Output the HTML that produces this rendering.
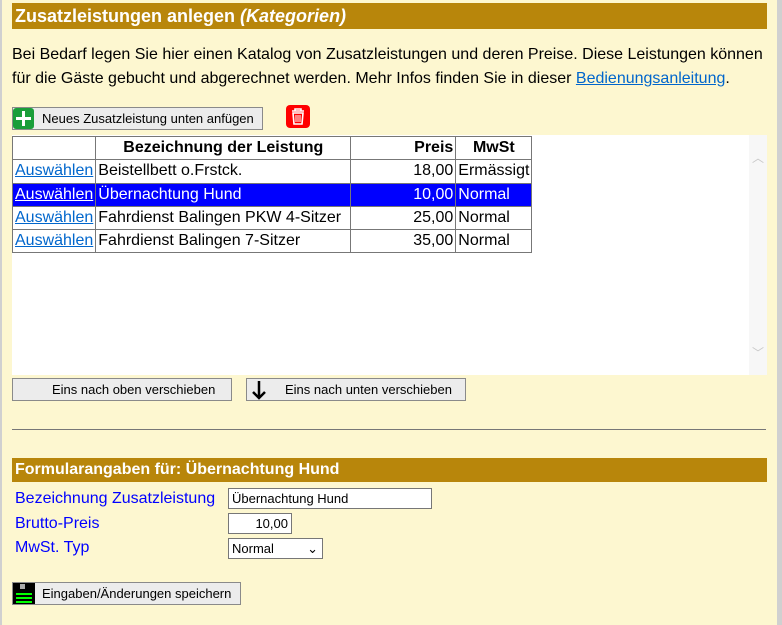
<!DOCTYPE html>
<html><head><meta charset="utf-8"><style>
*{box-sizing:border-box}
body{margin:0;width:782px;height:625px;background:#fdf7d0;font-family:"Liberation Sans",Arial,sans-serif;position:relative;overflow:hidden;color:#000}
.lb{position:absolute;left:0;top:0;width:2px;height:625px;background:#d0d0d0}
.rb{position:absolute;right:0;top:0;width:5px;height:625px;background:#d0d0d0}
.hdr{position:absolute;left:12px;width:755px;background:#b8860b;color:#fff;font-weight:bold;padding-left:3px}
.a{position:absolute}
a{color:#0066cc;text-decoration:underline}
.btn{position:absolute;background:#ececec;border:1px solid #8a8a8a;font-size:13px;height:23px;line-height:21px}
table{border-collapse:collapse;font-size:16px}
td,th{border:1px solid #777;height:23.3px;padding:0 2px;white-space:nowrap}
.sel td{background:#0000ff;color:#fff}
.sel a{color:#fff}
.lbl{position:absolute;left:15px;color:#0000ff;font-size:16px}
.inp{position:absolute;background:#fff;border:1px solid #777;font-size:13px;height:21px;line-height:19px;padding:0 3px}
</style></head><body>
<div class="lb"></div><div class="rb"></div>
<div class="hdr" style="top:3px;height:26px;line-height:26px;font-size:18px">Zusatzleistungen anlegen <i>(Kategorien)</i></div>
<div class="a" style="left:12px;top:43px;width:760px;font-size:16px;line-height:24px">Bei Bedarf legen Sie hier einen Katalog von Zusatzleistungen und deren Preise. Diese Leistungen können für die Gäste gebucht und abgerechnet werden. Mehr Infos finden Sie in dieser <a>Bedienungsanleitung</a>.</div>
<div class="btn" style="left:12px;top:107px;width:251px;padding-left:29px">Neues Zusatzleistung unten anfügen</div>
<div class="a" style="left:13px;top:108px;width:21px;height:21px;background:#1a9e3a;border-radius:3px"><div class="a" style="left:9px;top:3px;width:3px;height:15px;background:#fff"></div><div class="a" style="left:3px;top:9px;width:15px;height:3px;background:#fff"></div></div>
<div class="a" style="left:286px;top:105px;width:24px;height:23px;background:#f00;border-radius:4px">
<svg width="24" height="23" viewBox="0 0 24 23"><path d="M6 6h12M9 6V4h6v2M7 8l1 11h8l1-11z" fill="none" stroke="#fff" stroke-width="1.6"/><path d="M10 10v7M12 10v7M14 10v7" stroke="#fff" stroke-width="1"/></svg></div>
<div class="a" style="left:12px;top:135px;width:755px;height:240px;background:#fff"></div>
<div class="a" style="left:749px;top:135px;width:18px;height:240px;background:#f7f7f7;color:#c8c8c8;font-size:12px;text-align:center"><div style="margin-top:14px">︿</div><div style="margin-top:178px">﹀</div></div>
<table class="a" style="left:12px;top:136px">
<tr><th style="width:83px"></th><th style="width:255px">Bezeichnung der Leistung</th><th style="width:105px;text-align:right">Preis</th><th style="width:76px">MwSt</th></tr>
<tr><td><a>Auswählen</a></td><td>Beistellbett o.Frstck.</td><td style="text-align:right">18,00</td><td>Ermässigt</td></tr>
<tr class="sel"><td><a>Auswählen</a></td><td>Übernachtung Hund</td><td style="text-align:right">10,00</td><td>Normal</td></tr>
<tr><td><a>Auswählen</a></td><td>Fahrdienst Balingen PKW 4-Sitzer</td><td style="text-align:right">25,00</td><td>Normal</td></tr>
<tr><td><a>Auswählen</a></td><td>Fahrdienst Balingen 7-Sitzer</td><td style="text-align:right">35,00</td><td>Normal</td></tr>
</table>
<div class="btn" style="left:12px;top:378px;width:220px;padding-left:39px">Eins nach oben verschieben</div>
<div class="btn" style="left:246px;top:378px;width:220px;padding-left:38px">Eins nach unten verschieben</div>
<svg class="a" style="left:249px;top:379px" width="20" height="22"><path d="M10 2v17M4 13l6 6 6-6" fill="none" stroke="#000" stroke-width="2.5"/></svg>
<div class="a" style="left:12px;top:429px;width:754px;height:1px;background:#777"></div>
<div class="hdr" style="top:458px;height:24px;line-height:24px;font-size:16px">Formularangaben für: Übernachtung Hund</div>
<div class="lbl" style="top:490px">Bezeichnung Zusatzleistung</div>
<div class="lbl" style="top:515px">Brutto-Preis</div>
<div class="lbl" style="top:539px">MwSt. Typ</div>
<div class="inp" style="left:228px;top:488px;width:204px">Übernachtung Hund</div>
<div class="inp" style="left:228px;top:513px;width:64px;text-align:right">10,00</div>
<div class="inp" style="left:228px;top:538px;width:95px">Normal<span style="position:absolute;right:4px;top:0">&#8964;</span></div>
<div class="btn" style="left:12px;top:582px;width:229px;padding-left:29px">Eingaben/Änderungen speichern</div>
<div class="a" style="left:13px;top:583px;width:22px;height:21px;background:#000"><div class="a" style="left:7px;top:1px;width:5px;height:5px;background:#aaa"></div><div class="a" style="left:3px;top:10px;width:16px;height:2px;background:#0f0"></div><div class="a" style="left:3px;top:14px;width:16px;height:2px;background:#0f0"></div><div class="a" style="left:3px;top:18px;width:16px;height:2px;background:#0f0"></div></div>
</body></html>
